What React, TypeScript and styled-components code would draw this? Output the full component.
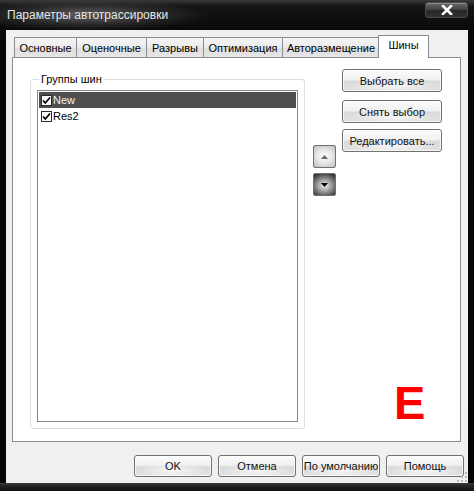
import React from "react";
import styled, { createGlobalStyle, css } from "styled-components";

const Global = createGlobalStyle`
  html, body { margin: 0; padding: 0; background: #000; }
  body { font-family: "Liberation Sans", Arial, sans-serif; font-size: 11px; color: #000; }
  #root { width: 474px; height: 491px; }
  * { box-sizing: border-box; }
`;

const Window = styled.div`
  width: 474px;
  height: 491px;
  display: flex;
  flex-direction: column;
  overflow: hidden;
  background: linear-gradient(to bottom, #2c2c2c 0px, #121212 5px, #070707 40px, #050505 100%);
`;

const TitleBar = styled.div`
  height: 30px;
  flex: none;
  display: flex;
  justify-content: space-between;
  align-items: flex-start;
  background:
    radial-gradient(ellipse 120px 16px at 88px 15px, rgba(120,120,120,0.85), rgba(70,70,70,0.45) 60%, rgba(0,0,0,0) 100%),
    linear-gradient(to bottom, #3a3a3a 0px, #141414 6px, #0a0a0a 100%);
`;

const Title = styled.div`
  padding: 8px 0 0 7px;
  font-size: 12px;
  line-height: 14px;
  color: #e6e6e6;
  text-shadow: 0 0 3px rgba(40,40,40,0.9);
  white-space: nowrap;
`;

const CloseButton = styled.div`
  width: 43px;
  height: 16px;
  margin: 2px 6px 0 0;
  border: 1px solid #4a4a4a;
  border-radius: 3px;
  display: flex;
  align-items: center;
  justify-content: center;
  background: linear-gradient(to bottom, #6a6a6a 0%, #444 45%, #262626 55%, #333 100%);
  box-shadow: inset 0 1px 0 rgba(255,255,255,0.25);
`;

const Client = styled.div`
  margin-left: 6px;
  width: 462px;
  height: 453px;
  flex: none;
  background: #f0f0f0;
  padding: 5px 4px 6px 6px;
  display: flex;
  flex-direction: column;
  position: relative;
`;

const BottomFrame = styled.div`
  flex: 1;
  background: linear-gradient(to bottom, #3a3a3a 0%, #222 40%, #111 100%);
`;

const TabStrip = styled.div`
  height: 22px;
  flex: none;
  display: flex;
  align-items: flex-end;
  padding-left: 2px;
  position: relative;
  z-index: 1;
`;

const Tab = styled.div<{ $w: number; $active?: boolean }>`
  width: ${(p) => p.$w}px;
  flex: none;
  border: 1px solid #898c95;
  border-bottom: none;
  margin-right: -1px;
  text-align: center;
  white-space: nowrap;
  color: #000;
  ${(p) =>
    p.$active
      ? css`
          height: 23px;
          margin-bottom: -1px;
          margin-left: -1px;
          background: #fff;
          line-height: 18px;
          position: relative;
          z-index: 2;
        `
      : css`
          height: 20px;
          padding-top: 1px;
          line-height: 18px;
          background: linear-gradient(to bottom, #f6f6f6 0%, #ebebeb 50%, #dddddd 51%, #e6e6e6 100%);
        `}
`;

const Panel = styled.div`
  height: 385px;
  flex: none;
  margin-right: 3px;
  border: 1px solid #898c95;
  background: #fff;
  display: flex;
  align-items: flex-start;
`;

const Group = styled.fieldset`
  margin: 15px 0 0 17px;
  width: 275px;
  height: 356px;
  padding: 4px 6px 6px 6px;
  border: 1px solid #d5dfe5;
  border-radius: 3px;
  flex: none;
`;

const Legend = styled.legend`
  margin-left: 2px;
  padding: 0 2px;
  line-height: 13px;
  font-size: 11px;
  color: #000;
`;

const ListBox = styled.div`
  width: 261px;
  height: 332px;
  border: 1px solid #828790;
  padding: 1px;
  background: #fff;
`;

const Row = styled.div<{ $selected?: boolean }>`
  height: 16px;
  display: flex;
  align-items: center;
  padding-left: 2px;
  background: ${(p) => (p.$selected ? "#4f4f4f" : "transparent")};
  color: ${(p) => (p.$selected ? "#f4f4f4" : "#000")};
  font-size: 11px;
`;

const Check = styled.span`
  width: 11px;
  height: 11px;
  margin-right: 1px;
  border: 1px solid #2a2a2a;
  background: #fff;
  display: flex;
  align-items: center;
  justify-content: center;
  flex: none;
`;

const ArrowColumn = styled.div`
  margin: 87px 0 0 8px;
  display: flex;
  flex-direction: column;
  gap: 5px;
  flex: none;
`;

const ArrowButton = styled.div<{ $dark?: boolean }>`
  width: 23px;
  height: 23px;
  border: 1px solid #707070;
  border-radius: 2px;
  display: flex;
  align-items: center;
  justify-content: center;
  background: ${(p) =>
    p.$dark
      ? "radial-gradient(ellipse 70% 60% at 50% 55%, #f2f2f2 0%, #a0a0a0 45%, #3a3a3a 100%)"
      : "radial-gradient(ellipse 70% 60% at 50% 50%, #ffffff 0%, #e6e6e6 55%, #c4c4c4 100%)"};
`;

const ButtonColumn = styled.div`
  align-self: stretch;
  margin-left: 6px;
  padding-top: 11px;
  width: 100px;
  display: flex;
  flex-direction: column;
  flex: none;
`;

const Button = styled.div<{ $w?: number; $h?: number; $mt?: number }>`
  width: ${(p) => p.$w ?? 100}px;
  height: ${(p) => p.$h ?? 23}px;
  margin-top: ${(p) => p.$mt ?? 0}px;
  flex: none;
  border: 1px solid #707070;
  border-radius: 3px;
  display: flex;
  align-items: center;
  justify-content: center;
  white-space: nowrap;
  font-size: 11px;
  color: #111;
  background:
    radial-gradient(ellipse 45% 35% at 50% 72%, rgba(250,250,250,0.95), rgba(250,250,250,0) 100%),
    linear-gradient(to bottom, #fbfbfb 0%, #f1f1f1 45%, #d9d9d9 55%, #e2e2e2 100%);
  box-shadow: inset 0 0 0 1px rgba(255,255,255,0.7);
`;

const Marker = styled.div`
  margin-top: auto;
  margin-bottom: 15px;
  margin-left: 52px;
  font-family: "Liberation Sans", Arial, sans-serif;
  font-weight: bold;
  font-size: 47px;
  line-height: 47px;
  color: #ff0000;
`;

const Footer = styled.div`
  margin-top: 13px;
  display: flex;
  justify-content: flex-end;
  gap: 6px;
  flex: none;
`;

const Grip = styled.svg`
  position: absolute;
  right: 1px;
  bottom: 1px;
`;

const tabs = [
  { label: "Основные", w: 63 },
  { label: "Оценочные", w: 71 },
  { label: "Разрывы", w: 58 },
  { label: "Оптимизация", w: 80 },
  { label: "Авторазмещение", w: 98 },
];

const rows = [
  { label: "New", selected: true },
  { label: "Res2", selected: false },
];

const CheckMark = () => (
  <svg width="9" height="9" viewBox="0 0 9 9">
    <path d="M1 4.5 L3.3 7 L8 1.5" stroke="#000" strokeWidth="1.8" fill="none" />
  </svg>
);

export default function App() {
  return (
    <>
      <Global />
      <Window>
        <TitleBar>
          <Title>Параметры автотрассировки</Title>
          <CloseButton>
            <svg width="12" height="10" viewBox="0 0 12 10">
              <path d="M2 1 L10 9 M10 1 L2 9" stroke="#fff" strokeWidth="2.6" strokeLinecap="square" />
            </svg>
          </CloseButton>
        </TitleBar>
        <Client>
          <TabStrip>
            {tabs.map((t) => (
              <Tab key={t.label} $w={t.w}>
                {t.label}
              </Tab>
            ))}
            <Tab $w={51} $active>
              Шины
            </Tab>
          </TabStrip>
          <Panel>
            <Group>
              <Legend>Группы шин</Legend>
              <ListBox>
                {rows.map((r) => (
                  <Row key={r.label} $selected={r.selected}>
                    <Check>
                      <CheckMark />
                    </Check>
                    {r.label}
                  </Row>
                ))}
              </ListBox>
            </Group>
            <ArrowColumn>
              <ArrowButton>
                <svg width="7" height="4" viewBox="0 0 7 4">
                  <path d="M0 4 L3.5 0 L7 4 Z" fill="#6a6a6a" />
                </svg>
              </ArrowButton>
              <ArrowButton $dark>
                <svg width="7" height="4" viewBox="0 0 7 4">
                  <path d="M0 0 L7 0 L3.5 4 Z" fill="#000" />
                </svg>
              </ArrowButton>
            </ArrowColumn>
            <ButtonColumn>
              <Button>Выбрать все</Button>
              <Button $mt={8}>Снять выбор</Button>
              <Button $mt={6}>Редактировать...</Button>
              <Marker>E</Marker>
            </ButtonColumn>
          </Panel>
          <Footer>
            <Button $w={78} $h={22}>OK</Button>
            <Button $w={78} $h={22}>Отмена</Button>
            <Button $w={78} $h={22}>По умолчанию</Button>
            <Button $w={78} $h={22}>Помощь</Button>
          </Footer>
          <Grip width="10" height="10" viewBox="0 0 10 10">
            {[
              [8, 0], [8, 4], [4, 4], [8, 8], [4, 8], [0, 8],
            ].map(([x, y]) => (
              <rect key={`${x}-${y}`} x={x} y={y} width="2" height="2" fill="#b8b8b8" />
            ))}
          </Grip>
        </Client>
        <BottomFrame />
      </Window>
    </>
  );
}
